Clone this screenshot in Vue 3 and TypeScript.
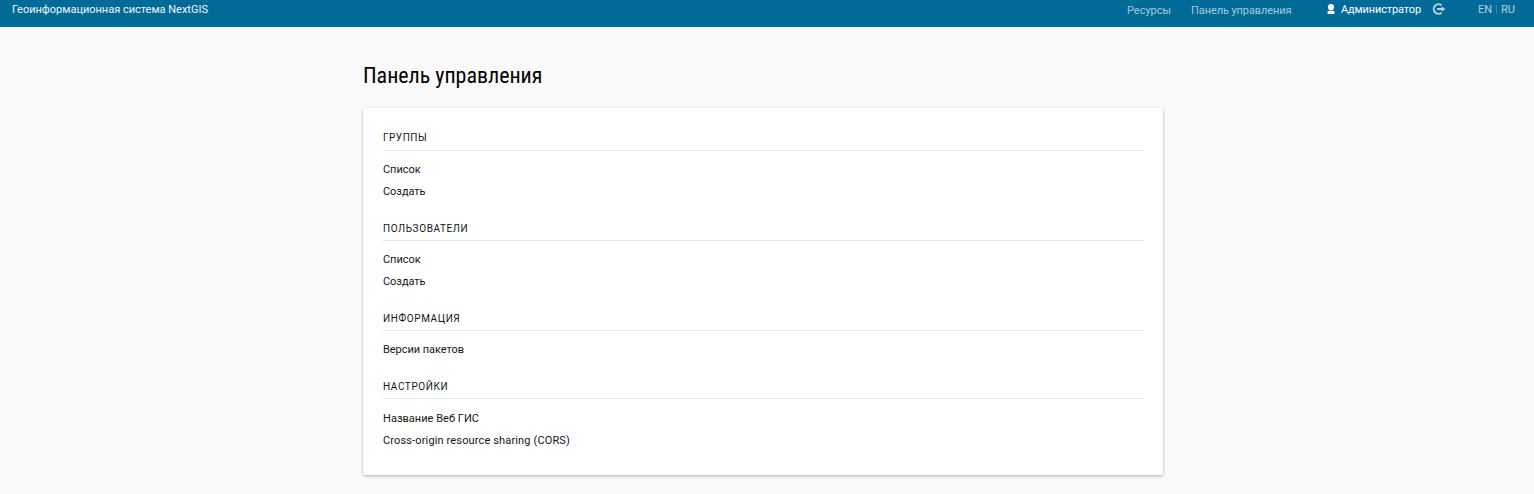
<script setup lang="ts">
interface Group { title: string; items: string[] }
const groups: Group[] = [
  { title: 'Группы', items: ['Список', 'Создать'] },
  { title: 'Пользователи', items: ['Список', 'Создать'] },
  { title: 'Информация', items: ['Версии пакетов'] },
  { title: 'Настройки', items: ['Название Веб ГИС', 'Cross-origin resource sharing (CORS)'] },
]
</script>

<template>
  <div class="page">
    <header class="header">
      <a class="brand">Геоинформационная система NextGIS</a>
      <nav class="nav">
        <a class="resources">Ресурсы</a>
        <a class="control">Панель управления</a>
        <span class="user">
          <svg class="person" viewBox="0 0 8 10"><ellipse cx="4" cy="3.1" rx="3.1" ry="3.1" /><path d="M.4 8.4Q.4 7 2.3 6.6q1.7.8 3.4 0Q7.6 7 7.6 8.4V9q0 .9-.9.9H1.3Q.4 9.9.4 9Z" /></svg>
          <span class="name">Администратор</span>
        </span>
        <svg class="logout" viewBox="0 0 14 12"><path class="ring" d="M9.6 2.3A4.8 4.8 0 1 0 9.6 9.7" /><path class="ring" d="M5 6h5" /><path class="head" d="M9.6 3.2 13.3 6 9.6 8.8Z" /></svg>
        <span class="langs"><a>EN</a><i></i><a>RU</a></span>
      </nav>
    </header>
    <main class="content">
      <h1>Панель управления</h1>
      <div class="card">
        <section v-for="g in groups" :key="g.title">
          <h2>{{ g.title }}</h2>
          <ul><li v-for="i in g.items" :key="i" :class="{ latin: i.startsWith('Cross') }"><a>{{ i }}</a></li></ul>
        </section>
      </div>
    </main>
  </div>
</template>

<style>
body { background: #fafafa; }
</style>
<style scoped>
.page { font: 11px/22px Roboto, sans-serif; color: #000; height: 494px; overflow: hidden; background: #fafafa; }
.header { height: 27px; background: #026a98; color: #fff; display: flex; justify-content: space-between; align-items: flex-start; line-height: 19px; box-sizing: border-box; padding: 0 19px 0 12px; }
.brand { color: #f0f6f9; letter-spacing: -.01px; }
.nav { display: flex; white-space: nowrap; }
.resources, .control { color: rgba(255,255,255,.65); line-height: 21px; }
.control { margin-left: 20px; letter-spacing: -.1px; }
.user { margin-left: 36px; display: flex; }
.person { width: 8px; height: 10px; fill: #fff; margin: 4px 5.5px 0 0; }
.name { letter-spacing: -.12px; }
.logout { width: 14px; height: 12px; margin: 3px 0 0 11px; }
.ring { fill: none; stroke: #b3d2e0; stroke-width: 2; }
.head { fill: #b3d2e0; }
.langs { margin-left: 32px; display: flex; color: rgba(255,255,255,.7); }
.langs i { width: 1px; height: 9px; margin: 5px 4px 0; background: rgba(255,255,255,.2); }
.content { width: 800px; margin-left: 363px; }
h1 { font: 400 22px/30px "Roboto Condensed", Roboto, sans-serif; margin: 0; padding: 34px 0 17px; letter-spacing: -.03px; }
.card { height: 367px; box-sizing: border-box; background: #fff; color: #151515; padding: 21px 19px 0 20px; border-radius: 2px; box-shadow: 0 1px 3px rgba(0,0,0,.3); }
h2 { font-size: 10px; font-weight: 400; line-height: 16px; letter-spacing: .6px; text-transform: uppercase; margin: 0; padding: 2px 0 3px; border-bottom: 1px solid #e6e9ec; }
section:first-child h2 { padding: 1px 0 4px; letter-spacing: .5px; }
ul { list-style: none; margin: 0; padding: 8px 0 16px; }
section:last-child ul { padding-top: 9px; }
section:last-child li { letter-spacing: .03px; }
li { letter-spacing: -.04px; }
section:last-child .latin { letter-spacing: .14px; }
</style>
